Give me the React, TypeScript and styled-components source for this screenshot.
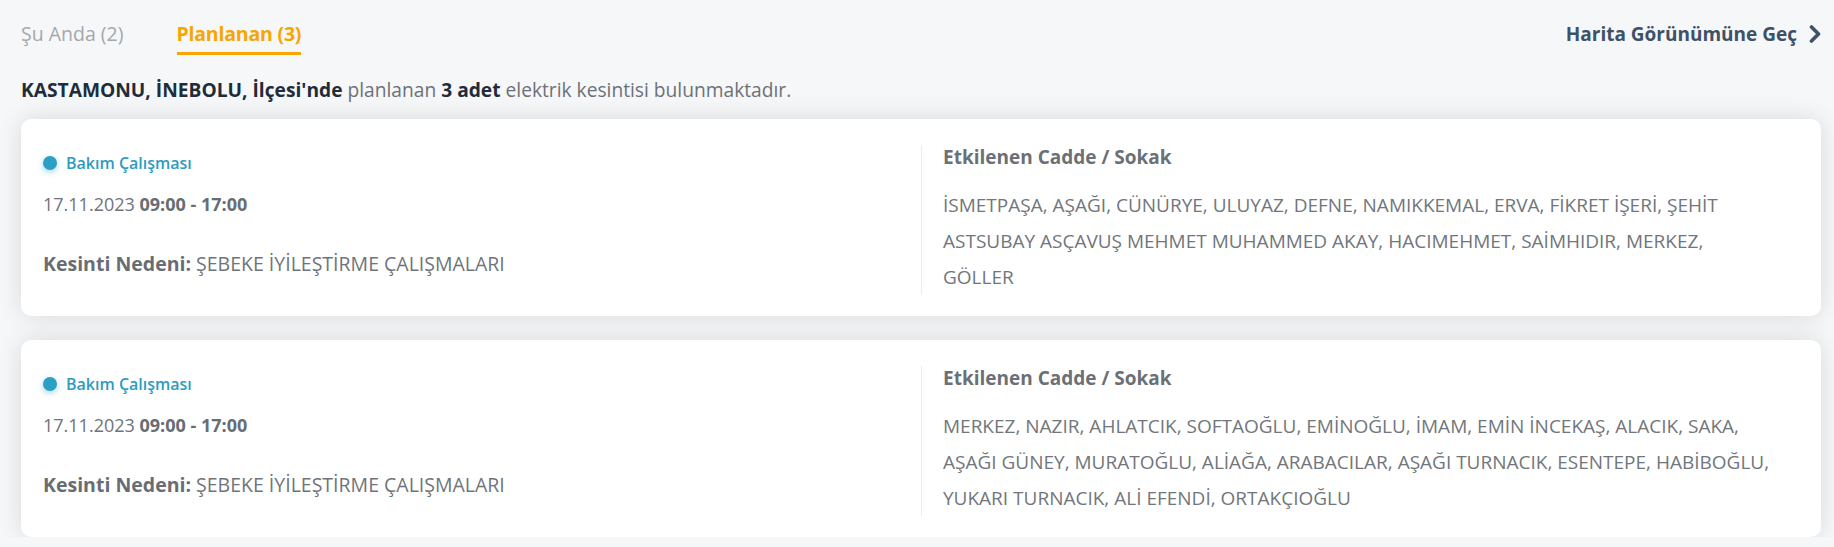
import styled, { createGlobalStyle } from 'styled-components';

const GlobalStyle = createGlobalStyle`
  body {
    margin: 0;
    background: #f6f7f9;
    font-family: "Open Sans", "Noto Sans", sans-serif;
  }
`;

const Page = styled.div`
  padding: 21px 13px 0 21px;
`;

const Header = styled.div`
  display: flex;
  justify-content: space-between;
  align-items: flex-start;
`;

const Tabs = styled.div`
  display: flex;
  gap: 53px;
`;

const Tab = styled.div<{ $active?: boolean }>`
  font-size: 19.5px;
  line-height: 26px;
  padding-bottom: 5px;
  border-bottom: 3px solid ${({ $active }) => ($active ? '#f9a500' : 'transparent')};
  color: ${({ $active }) => ($active ? '#f9a500' : '#a4a8ad')};
  font-weight: ${({ $active }) => ($active ? 700 : 400)};
  letter-spacing: ${({ $active }) => ($active ? '-0.2px' : '0')};
  cursor: pointer;
`;

const MapLink = styled.a`
  display: flex;
  align-items: center;
  gap: 12px;
  font-size: 19px;
  line-height: 26px;
  font-weight: 700;
  color: #3e5166;
  text-decoration: none;
`;

const Summary = styled.p`
  margin: 22px 0 16px;
  font-size: 19.2px;
  line-height: 26px;
  color: #6c7177;

  b {
    color: #1f2d3b;
    font-weight: 700;
  }
`;

const List = styled.div`
  display: flex;
  flex-direction: column;
  gap: 24px;
`;

const Card = styled.div`
  display: grid;
  grid-template-columns: 1fr 1fr;
  background: #fff;
  border-radius: 10px;
  padding: 26px 22px 21px;
  box-shadow: 0 0 24px rgba(0, 0, 0, 0.12);
`;

const Left = styled.div`
  display: flex;
  flex-direction: column;
`;

const Kind = styled.div`
  display: flex;
  align-items: center;
  gap: 9px;
  height: 36px;
  font-size: 16px;
  font-weight: 600;
  color: #2d9bc0;
`;

const Dot = styled.span`
  width: 14px;
  height: 14px;
  border-radius: 50%;
  background: #2c9fc4;
  box-shadow: 0 2px 6px rgba(44, 159, 196, 0.45);
`;

const DateLine = styled.div`
  margin-top: 5px;
  font-size: 18px;
  line-height: 36px;
  color: #6f747a;

  b {
    font-weight: 700;
    color: #686d73;
  }
`;

const Reason = styled.div`
  margin-top: 24px;
  font-size: 19.5px;
  line-height: 36px;
  color: #6f747a;

  b {
    font-weight: 700;
    color: #686d73;
  }
`;

const Right = styled.div`
  border-left: 1px solid #ebecee;
  padding: 0 29px 0 21px;
`;

const StreetsTitle = styled.div`
  font-size: 19px;
  line-height: 24px;
  font-weight: 700;
  color: #6b7077;
`;

const Streets = styled.div`
  margin-top: 18px;
  font-size: 19px;
  line-height: 36px;
  color: #71767c;
`;

const outages = [
  {
    date: '17.11.2023',
    time: '09:00 - 17:00',
    reason: 'ŞEBEKE İYİLEŞTİRME ÇALIŞMALARI',
    streets:
      'İSMETPAŞA, AŞAĞI, CÜNÜRYE, ULUYAZ, DEFNE, NAMIKKEMAL, ERVA, FİKRET İŞERİ, ŞEHİT ASTSUBAY ASÇAVUŞ MEHMET MUHAMMED AKAY, HACIMEHMET, SAİMHIDIR, MERKEZ, GÖLLER',
  },
  {
    date: '17.11.2023',
    time: '09:00 - 17:00',
    reason: 'ŞEBEKE İYİLEŞTİRME ÇALIŞMALARI',
    streets:
      'MERKEZ, NAZIR, AHLATCIK, SOFTAOĞLU, EMİNOĞLU, İMAM, EMİN İNCEKAŞ, ALACIK, SAKA, AŞAĞI GÜNEY, MURATOĞLU, ALİAĞA, ARABACILAR, AŞAĞI TURNACIK, ESENTEPE, HABİBOĞLU, YUKARI TURNACIK, ALİ EFENDİ, ORTAKÇIOĞLU',
  },
];

export default function App() {
  return (
    <>
      <GlobalStyle />
      <Page>
        <Header>
          <Tabs>
            <Tab>Şu Anda (2)</Tab>
            <Tab $active>Planlanan (3)</Tab>
          </Tabs>
          <MapLink href="#">
            Harita Görünümüne Geç
            <svg width="12" height="20" viewBox="0 0 12 20" fill="none">
              <path d="M2.5 3 L9.5 10 L2.5 17" stroke="#3e5166" strokeWidth="3.6" strokeLinecap="round" strokeLinejoin="round" />
            </svg>
          </MapLink>
        </Header>

        <Summary>
          <b>KASTAMONU, İNEBOLU, İlçesi'nde</b> planlanan <b>3 adet</b> elektrik kesintisi bulunmaktadır.
        </Summary>

        <List>
          {outages.map((o, i) => (
            <Card key={i}>
              <Left>
                <Kind>
                  <Dot />
                  Bakım Çalışması
                </Kind>
                <DateLine>
                  {o.date} <b>{o.time}</b>
                </DateLine>
                <Reason>
                  <b>Kesinti Nedeni:</b> {o.reason}
                </Reason>
              </Left>
              <Right>
                <StreetsTitle>Etkilenen Cadde / Sokak</StreetsTitle>
                <Streets>{o.streets}</Streets>
              </Right>
            </Card>
          ))}
        </List>
      </Page>
    </>
  );
}
